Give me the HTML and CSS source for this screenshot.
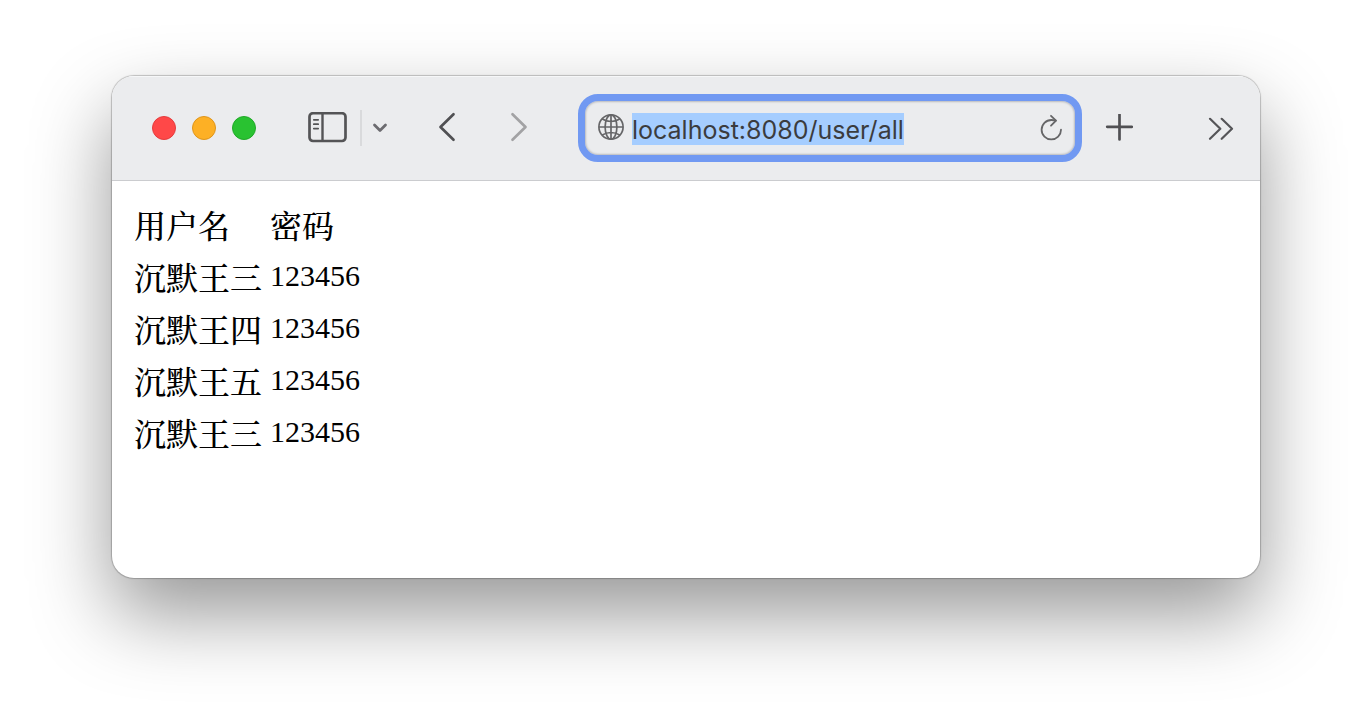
FILE: index.html
```html
<!DOCTYPE html>
<html lang="zh-CN">
<head>
<meta charset="utf-8">
<title>localhost:8080/user/all</title>
<link rel="stylesheet" href="styles.css">
</head>
<body>
<main class="window">
  <header class="toolbar">
    <div class="lights">
      <button class="light close" aria-label="关闭"></button>
      <button class="light minimize" aria-label="最小化"></button>
      <button class="light maximize" aria-label="缩放"></button>
    </div>
    <div class="sidebar-group">
      <button class="icon-button" aria-label="边栏">
        <svg width="39" height="32" viewBox="0 0 39 32" fill="none" stroke="#545456">
          <rect x="1.5" y="1.2" width="36" height="27.8" rx="3.5" stroke-width="2.7"/>
          <path d="M14.5 1v28" stroke-width="2.4"/>
          <path d="M5.8 7.8h4.4M5.8 12.2h4.4M5.8 16.6h4.4" stroke-width="1.7" stroke-linecap="round"/>
        </svg>
      </button>
      <span class="separator"></span>
      <button class="icon-button" aria-label="标签页组">
        <svg width="16" height="16" viewBox="0 0 16 16" fill="none" stroke="#6c6b70" stroke-width="2.8" stroke-linecap="round" stroke-linejoin="round"><path d="M2.5 5 8 10.500l5.500-5.500"/></svg>
      </button>
    </div>
    <nav class="history">
      <button class="icon-button" aria-label="后退">
        <svg width="18" height="32" viewBox="0 0 18 32" fill="none" stroke="#505053" stroke-width="2.7" stroke-linecap="round" stroke-linejoin="round"><path d="M15.500 2.200 2.500 15l13 12.800"/></svg>
      </button>
      <button class="icon-button" aria-label="前进">
        <svg width="18" height="32" viewBox="0 0 18 32" fill="none" stroke="#a2a2a4" stroke-width="2.7" stroke-linecap="round" stroke-linejoin="round"><path d="M2.500 2.200 15.500 15l-13 12.800"/></svg>
      </button>
    </nav>
    <div class="address">
      <svg class="globe" width="26" height="28" viewBox="0 0 26 28" fill="none" stroke="#666668" stroke-width="1.7">
        <circle cx="13" cy="13" r="12.1"/><ellipse cx="13" cy="13" rx="5.900" ry="12.1"/>
        <path d="M13 1v24M1 13h24M4.200 5q8.800 5 17.600 0M4.200 21q8.800-5 17.600 0"/>
      </svg>
      <input class="url" type="text" value="localhost:8080/user/all" aria-label="地址" spellcheck="false">
      <button class="icon-button reload" aria-label="重新载入">
        <svg width="22" height="28" viewBox="0 0 22 28" fill="none" stroke="#666668" stroke-width="1.800" stroke-linecap="round" stroke-linejoin="round">
          <path d="M21 15.700A9.700 9.700 0 1 1 11.300 6q2.200 0 4.500.6"/><path d="M11 1.800l5 4.900-5 5"/>
        </svg>
      </button>
    </div>
    <button class="icon-button add" aria-label="新建标签页">
      <svg width="28" height="28" viewBox="0 0 28 28" fill="none" stroke="#505053" stroke-width="2.700" stroke-linecap="round"><path d="M14.500 .5v25M2.200 12.800h24.600"/></svg>
    </button>
    <button class="icon-button more" aria-label="更多">
      <svg width="26" height="24" viewBox="0 0 26 24" fill="none" stroke="#555558" stroke-width="2.200" stroke-linecap="round" stroke-linejoin="round"><path d="M2 2.800l10.300 10L2 22.800M13.700 2.800 24 12.800 13.700 22.800"/></svg>
    </button>
  </header>
  <section class="page">
    <table class="users">
      <thead><tr><td>用户名</td><td>密码</td></tr></thead>
      <tbody>
        <tr><td>沉默王三</td><td class="password">123456</td></tr>
        <tr><td>沉默王四</td><td class="password">123456</td></tr>
        <tr><td>沉默王五</td><td class="password">123456</td></tr>
        <tr><td>沉默王三</td><td class="password">123456</td></tr>
      </tbody>
    </table>
  </section>
</main>
</body>
</html>
```
FILE: styles.css
```css
* { box-sizing: border-box; }
body {
  margin: 0;
  min-height: 100vh;
  display: flex;
  padding: 76px 112px 148px;
  background: #fff;
  overflow: hidden;
}
.window {
  flex: 1;
  display: flex;
  flex-direction: column;
  border-radius: 22px;
  background: #fff;
  overflow: hidden;
  box-shadow: 0 0 1px 1px rgba(0, 0, 0, .22), 0 36px 80px rgba(0, 0, 0, .41);
}
.toolbar {
  display: flex;
  align-items: center;
  padding: 18px 26px 18px 40px;
  background: #ebecee;
  border-bottom: 1px solid #cbcccf;
  box-shadow: inset 0 1px 0 #f6f7f8;
}
button { padding: 0; border: 0; background: none; }
.lights { display: flex; gap: 16px; }
.light { width: 24px; height: 24px; border-radius: 50%; border: 1px solid; }
.close { background: #ff4848; border-color: #e53c3d; }
.minimize { background: #fdb025; border-color: #df951b; }
.maximize { background: #29c231; border-color: #20a928; }
.icon-button { display: flex; flex: none; }
.sidebar-group { display: flex; align-items: center; margin-left: 52px; }
.separator { width: 2px; height: 36px; margin: 0 10px 0 13px; background: #d9dadc; }
.history { display: flex; gap: 54px; margin: 0 50px; }
.address {
  flex: 1;
  min-width: 0;
  height: 68px;
  display: flex;
  align-items: center;
  padding: 0 13px;
  border: 7px solid #7199f2;
  border-radius: 20px;
  box-shadow: inset 0 0 2px 1px #b9babd;
}
.globe { flex: none; margin-right: 8px; }
.url {
  field-sizing: content;
  height: 32px;
  margin: 2px 0 0;
  padding: 2px 0 0;
  border: 0;
  outline: 0;
  background: #a5cdff;
  color: #3b3c3e;
  font: 25px/30px Inter, sans-serif;
}
.reload { margin-left: auto; }
.add { margin-left: 23px; }
.more { margin-left: 75px; }
.page { flex: 1; padding: 18px 16px 16px; }
.users {
  border-spacing: 4px;
  color: #000;
  font: 500 32px/44px "Liberation Serif", "Noto Serif CJK SC", "Noto Sans CJK SC", serif;
}
.users td { height: 48px; padding: 2px; white-space: nowrap; }
.users .password { padding-bottom: 8px; font-size: 30px; line-height: 36px; }
```
